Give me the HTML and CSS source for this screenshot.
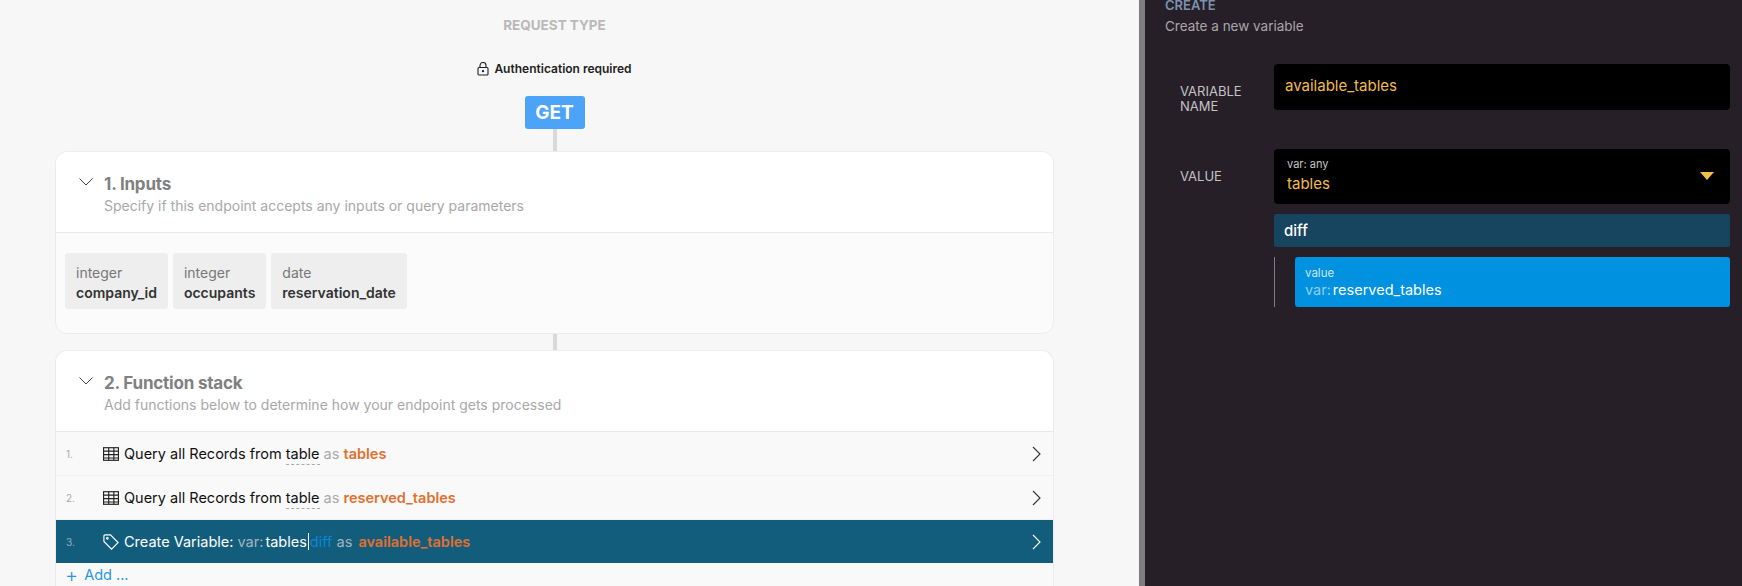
FILE: index.html
```html
<!DOCTYPE html>
<html>
<head>
<meta charset="utf-8">
<title>Create variable</title>
<link rel="stylesheet" href="styles.css">
</head>
<body>

<div class="layout">

<div class="canvas">
	<div class="req-title">REQUEST TYPE</div>
	<div class="auth">
		<svg class="lock" viewBox="0 0 12 14"><rect x="1" y="5.5" width="10" height="7.5" rx="1"/><path d="M3 5.5V3.5a3 3 0 0 1 6 0v2"/><circle cx="6" cy="9.2" r=".6"/></svg>
		Authentication required
	</div>
	<div class="get">GET</div>
	<div class="link link-a"></div>

	<section class="card">
		<header class="card-head">
			<svg class="fold" viewBox="0 0 16 10"><path d="M1.5 1.5L8 8l6.5-6.5"/></svg>
			<div>
				<h2>1. Inputs</h2>
				<p>Specify if this endpoint accepts any inputs or query parameters</p>
			</div>
		</header>
		<div class="inputs">
			<div class="chip"><span>integer</span><b>company_id</b></div>
			<div class="chip"><span>integer</span><b>occupants</b></div>
			<div class="chip"><span>date</span><b>reservation_date</b></div>
		</div>
	</section>

	<div class="link link-b"></div>

	<section class="card card-stack">
		<header class="card-head">
			<svg class="fold" viewBox="0 0 16 10"><path d="M1.5 1.5L8 8l6.5-6.5"/></svg>
			<div>
				<h2>2. Function stack</h2>
				<p>Add functions below to determine how your endpoint gets processed</p>
			</div>
		</header>
		<div class="row">
			<span class="num">1.</span>
			<svg class="ico" viewBox="0 0 14 14"><rect x=".5" y="1.5" width="13" height="11"/><path d="M.5 4.5h13M.5 7.5h13M.5 10.5h13M5 1.5v11M9.500 1.500v11"/></svg>
			<span class="txt">Query all Records from <u>table</u> <i>as</i> <em>tables</em></span>
			<svg class="next" viewBox="0 0 9 16"><path d="M1 1l7 7-7 7"/></svg>
		</div>
		<div class="row">
			<span class="num">2.</span>
			<svg class="ico" viewBox="0 0 14 14"><rect x=".5" y="1.5" width="13" height="11"/><path d="M.5 4.5h13M.5 7.5h13M.5 10.5h13M5 1.500v11M9.500 1.500v11"/></svg>
			<span class="txt">Query all Records from <u>table</u> <i>as</i> <em>reserved_tables</em></span>
			<svg class="next" viewBox="0 0 9 16"><path d="M1 1l7 7-7 7"/></svg>
		</div>
		<div class="row row-on">
			<span class="num">3.</span>
			<svg class="ico" viewBox="0 0 14 14"><path d="M.8 1.800a1 1 0 0 1 1-1h4.700l6.700 6.700-5.700 5.700-6.700-6.700z"/><circle cx="3.800" cy="3.800" r=".7"/></svg>
			<span class="txt">Create Variable: <i>var:</i>tables<span class="caret"></span><span class="filter">diff</span> <i>as</i> <em>available_tables</em></span>
			<svg class="next" viewBox="0 0 9 16"><path d="M1 1l7 7-7 7"/></svg>
		</div>
		<div class="add"><span class="plus">+</span> Add ...</div>
	</section>
</div>

<aside class="panel">
	<div class="panel-title">CREATE</div>
	<div class="panel-sub">Create a new variable</div>

	<div class="field field-name">
		<label>VARIABLE NAME</label>
		<div class="box box-name">available_tables</div>
	</div>

	<div class="field">
		<label class="lbl-value">VALUE</label>
		<div class="value-col">
			<div class="box box-value">
				<div>
					<small>var: any</small>
					<div class="val">tables</div>
				</div>
				<span class="tri"></span>
			</div>
			<div class="filter-bar">diff</div>
			<div class="args">
				<div class="arg">
					<small>value</small>
					<div><i>var:</i>reserved_tables</div>
				</div>
			</div>
		</div>
	</div>
</aside>

</div>

</body>
</html>
```

FILE: styles.css
```css
html, body {
	margin: 0;
	height: 100%;
	overflow: hidden;
}

body {
	font-family: Inter, "Noto Sans", sans-serif;
	background: #f7f7f7;
}

.layout {
	display: flex;
	height: 586px;
	overflow: hidden;
}

/* left: the endpoint canvas */
.canvas {
	width: 1139px;
	flex: none;
	padding: 0 85px 0 55px;
	box-sizing: border-box;
	display: flex;
	flex-direction: column;
	align-items: center;
}

.req-title {
	margin-top: 17px;
	font-size: 13.500px;
	line-height: 17px;
	font-weight: 700;
	color: #b9b9b9;
}

.auth {
	margin-top: 27px;
	display: flex;
	align-items: center;
	gap: 5px;
	font-size: 12px;
	line-height: 16px;
	font-weight: 600;
	color: #222;
}

.lock {
	width: 12px;
	height: 14px;
	fill: none;
	stroke: #222;
	stroke-width: 1.100;
}

.get {
	margin-top: 19px;
	width: 60px;
	height: 33px;
	border-radius: 3px;
	background: #4da3f7;
	color: #fff;
	font-size: 19px;
	line-height: 33px;
	font-weight: 700;
	text-align: center;
}

.link {
	width: 4px;
	background: #d9d9d9;
	flex: none;
}
.link-a { height: 22px; }
.link-b { height: 16px; }

.card {
	width: 100%;
	background: #fbfbfb;
	border: 1px solid #ececec;
	border-radius: 12px;
	box-sizing: border-box;
	flex: none;
}

.card-stack {
	border-bottom: 0;
	border-radius: 12px 12px 0 0;
	background: #f9f9f9;
}

.card-head {
	display: flex;
	height: 81px;
	box-sizing: border-box;
	padding: 22px 0 0 22px;
	gap: 10px;
	background: #fff;
	border-bottom: 1px solid #e9e9e9;
	border-radius: 12px 12px 0 0;
}

.fold {
	width: 16px;
	height: 10px;
	margin-top: 3px;
	fill: none;
	stroke: #444;
	stroke-width: 1;
}

.card-head h2 {
	margin: 0;
	font-size: 17px;
	line-height: 20px;
	font-weight: 700;
	letter-spacing: -.2px;
	color: #808080;
}

.card-head p {
	margin: 3px 0 0;
	font-size: 14px;
	line-height: 18px;
	color: #a8a8a8;
}

.inputs {
	display: flex;
	gap: 5px;
	padding: 20px 0 24px 9px;
}

.chip {
	height: 56px;
	box-sizing: border-box;
	padding: 10px 11px 0;
	background: #eeeeee;
	border-radius: 3px;
	font-size: 14px;
	line-height: 20px;
	color: #777;
}
.chip span, .chip b { display: block; }
.chip b {
	font-weight: 600;
	color: #333;
}

.row {
	display: flex;
	align-items: center;
	height: 44px;
	box-sizing: border-box;
	padding: 0 12px 0 10px;
	border-bottom: 1px solid #efefef;
	font-size: 14.500px;
	color: #111;
}

.num {
	width: 37px;
	font-size: 10px;
	color: #aaa;
}

.ico {
	width: 16px;
	height: 16px;
	margin-right: 5px;
	fill: none;
	stroke: #222;
	stroke-width: 1;
}

.txt { flex: 1; white-space: nowrap; }
.txt u {
	text-decoration: none;
	border-bottom: 1px dashed #aaa;
	padding-bottom: 2px;
}
.txt i {
	font-style: normal;
	color: #aaa;
}
.txt em {
	font-style: normal;
	font-weight: 600;
	color: #e0702f;
}

.next {
	width: 9px;
	height: 16px;
	fill: none;
	stroke: #333;
	stroke-width: 1.100;
}

.row-on {
	height: 43px;
	background: #135d7c;
	border-bottom: 0;
	color: #fff;
}
.row-on .num { color: #9ab; }
.row-on .ico, .row-on .next { stroke: #fff; }
.row-on .txt i { color: #a0b4bf; margin-right: 2px; }

.caret {
	display: inline-block;
	width: 1px;
	height: 17px;
	margin: 0 1px;
	vertical-align: -3px;
	background: #fff;
}
.filter { color: #0a86d6; }

.add {
	padding: 1px 0 0 9px;
	font-size: 14.500px;
	line-height: 22px;
	color: #2a95e0;
}
.plus {
	font-size: 20px;
	line-height: 18px;
	vertical-align: -2px;
	font-weight: 300;
	margin-right: 2px;
}

/* right: dark statement panel */
.panel {
	flex: 1;
	border-left: 6px solid #7f7d80;
	background: #271f28;
	color: #ccc;
	padding: 0 12px 0 20px;
	box-sizing: border-box;
}

.panel-title {
	margin-top: -3px;
	font-size: 13px;
	line-height: 16px;
	font-weight: 600;
	color: #7a93ad;
}

.panel-sub {
	margin-top: 4px;
	font-size: 13.500px;
	line-height: 18px;
	color: #a8a6a9;
}

.field {
	display: flex;
	padding-left: 15px;
}

.field-name {
	margin-top: 29px;
	padding-bottom: 35px;
	border-bottom: 0;
}

.field label {
	width: 94px;
	flex: none;
	font-size: 13px;
	line-height: 15px;
	color: #c4c2c5;
}
.field-name label { padding-top: 20px; }
.lbl-value { padding-top: 20px; }

.box {
	background: #000;
	border-radius: 4px;
	color: #f2bd4e;
	box-sizing: border-box;
}

.box-name {
	flex: 1;
	height: 46px;
	padding: 12px 11px;
	font-size: 15px;
	line-height: 20px;
}

.value-col { flex: 1; min-width: 0; }

.box-value {
	height: 55px;
	padding: 8px 13px 0;
	display: flex;
	justify-content: space-between;
}
.box-value small {
	display: block;
	font-size: 11px;
	line-height: 14px;
	color: #c6c6c6;
}
.val {
	margin-top: 3px;
	font-size: 15px;
	line-height: 20px;
}

.tri {
	margin: 15px 3px 0 0;
	width: 0;
	height: 0;
	border-left: 7px solid transparent;
	border-right: 7px solid transparent;
	border-top: 8px solid #f2bd4e;
}

.filter-bar {
	margin-top: 10px;
	height: 33px;
	padding-left: 10px;
	background: #17445f;
	border-radius: 2px;
	font-size: 15px;
	line-height: 33px;
	font-weight: 500;
	color: #fff;
}

.args {
	margin-top: 10px;
	padding-left: 20px;
	border-left: 1px solid #7f7d80;
}

.arg {
	height: 50px;
	padding: 9px 10px 0;
	box-sizing: border-box;
	background: #0091e0;
	border-radius: 3px;
	font-size: 14.500px;
	line-height: 20px;
	color: #fff;
}
.arg small {
	display: block;
	font-size: 11.500px;
	line-height: 14px;
	color: #cfe9f8;
}
.arg i {
	font-style: normal;
	color: #8fcdf0;
	margin-right: 2px;
}
```
